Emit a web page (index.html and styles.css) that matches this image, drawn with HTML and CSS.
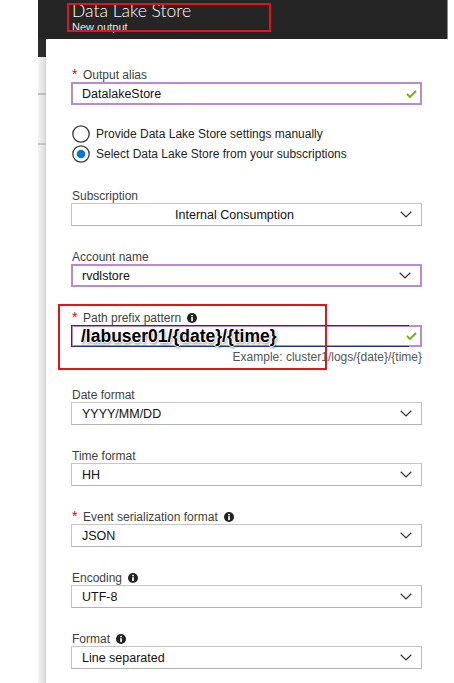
FILE: index.html
```html
<!DOCTYPE html>
<html lang="en">
<head>
<meta charset="utf-8">
<title>Data Lake Store - New output</title>
<link rel="stylesheet" href="styles.css">
</head>
<body>
<div class="stage">
  <div class="gutter"></div>
  <div class="blade">
    <header class="blade-head">
      <h1 class="blade-title">Data Lake Store</h1>
      <div class="blade-sub">New output</div>
    </header>
    <div class="blade-body">
      <div class="edge"></div>
      <form class="panel">
        <div class="field">
          <div class="label"><span class="req">*</span>Output alias</div>
          <div class="box box-purple"><span class="val">DatalakeStore</span><svg class="check" width="11" height="8" viewBox="0 0 11 8"><path d="M1 4 L4 7 L10 1" fill="none" stroke="#6bb700" stroke-width="1.8"/></svg></div>
        </div>

        <div class="radios">
          <div class="radio"><svg class="rc" width="18" height="18" viewBox="0 0 18 18"><circle cx="9" cy="9" r="8.2" fill="#fff" stroke="#3a3a3a" stroke-width="1.3"/></svg><span>Provide Data Lake Store settings manually</span></div>
          <div class="radio"><svg class="rc" width="18" height="18" viewBox="0 0 18 18"><circle cx="9" cy="9" r="8.2" fill="#fff" stroke="#3a3a3a" stroke-width="1.3"/><circle cx="9" cy="9" r="4.3" fill="#0078d7"/></svg><span>Select Data Lake Store from your subscriptions</span></div>
        </div>

        <div class="field">
          <div class="label">Subscription</div>
          <div class="box box-grey"><span class="val val-center">Internal Consumption</span><svg class="chev" width="12" height="7" viewBox="0 0 12 7"><path d="M0.7 0.8 L6 6 L11.3 0.8" fill="none" stroke="#333" stroke-width="1.2"/></svg></div>
        </div>

        <div class="field">
          <div class="label">Account name</div>
          <div class="box box-purple"><span class="val">rvdlstore</span><svg class="chev" width="12" height="7" viewBox="0 0 12 7"><path d="M0.7 0.8 L6 6 L11.3 0.8" fill="none" stroke="#333" stroke-width="1.2"/></svg></div>
        </div>

        <div class="field field-path">
          <div class="label"><span class="req">*</span>Path prefix pattern<svg class="info" width="10" height="10" viewBox="0 0 10 10"><circle cx="5" cy="5" r="5" fill="#222"/><rect x="4.2" y="4.2" width="1.7" height="3.9" fill="#fff"/><circle cx="5.05" cy="2.6" r="0.95" fill="#fff"/></svg></div>
          <div class="box box-purple box-path"><span class="val val-big">/labuser01/{date}/{time}</span><svg class="check" width="11" height="8" viewBox="0 0 11 8"><path d="M1 4 L4 7 L10 1" fill="none" stroke="#6bb700" stroke-width="1.8"/></svg></div>
          <div class="hint">Example: cluster1/logs/{date}/{time}</div>
        </div>

        <div class="field">
          <div class="label">Date format</div>
          <div class="box box-grey"><span class="val">YYYY/MM/DD</span><svg class="chev" width="12" height="7" viewBox="0 0 12 7"><path d="M0.7 0.8 L6 6 L11.3 0.8" fill="none" stroke="#333" stroke-width="1.2"/></svg></div>
        </div>

        <div class="field">
          <div class="label">Time format</div>
          <div class="box box-grey"><span class="val">HH</span><svg class="chev" width="12" height="7" viewBox="0 0 12 7"><path d="M0.7 0.8 L6 6 L11.3 0.8" fill="none" stroke="#333" stroke-width="1.2"/></svg></div>
        </div>

        <div class="field">
          <div class="label"><span class="req">*</span>Event serialization format<svg class="info" width="10" height="10" viewBox="0 0 10 10"><circle cx="5" cy="5" r="5" fill="#222"/><rect x="4.2" y="4.2" width="1.7" height="3.9" fill="#fff"/><circle cx="5.05" cy="2.6" r="0.95" fill="#fff"/></svg></div>
          <div class="box box-grey"><span class="val">JSON</span><svg class="chev" width="12" height="7" viewBox="0 0 12 7"><path d="M0.7 0.8 L6 6 L11.3 0.8" fill="none" stroke="#333" stroke-width="1.2"/></svg></div>
        </div>

        <div class="field">
          <div class="label">Encoding<svg class="info" width="10" height="10" viewBox="0 0 10 10"><circle cx="5" cy="5" r="5" fill="#222"/><rect x="4.2" y="4.2" width="1.7" height="3.9" fill="#fff"/><circle cx="5.05" cy="2.6" r="0.95" fill="#fff"/></svg></div>
          <div class="box box-grey"><span class="val">UTF-8</span><svg class="chev" width="12" height="7" viewBox="0 0 12 7"><path d="M0.7 0.8 L6 6 L11.3 0.8" fill="none" stroke="#333" stroke-width="1.2"/></svg></div>
        </div>

        <div class="field">
          <div class="label">Format<svg class="info" width="10" height="10" viewBox="0 0 10 10"><circle cx="5" cy="5" r="5" fill="#222"/><rect x="4.2" y="4.2" width="1.7" height="3.9" fill="#fff"/><circle cx="5.05" cy="2.6" r="0.95" fill="#fff"/></svg></div>
          <div class="box box-grey"><span class="val">Line separated</span><svg class="chev" width="12" height="7" viewBox="0 0 12 7"><path d="M0.7 0.8 L6 6 L11.3 0.8" fill="none" stroke="#333" stroke-width="1.2"/></svg></div>
        </div>
      </form>
    </div>
  </div>
</div>
<div class="mark mark-title"></div>
<div class="mark mark-path"></div>
</body>
</html>
```

FILE: styles.css
```css
* { box-sizing: border-box; }
html, body { margin: 0; padding: 0; background: #fff; }
body {
  font-family: "Liberation Sans", Arial, sans-serif;
  font-size: 12px;
  color: #222;
  position: relative;
  width: 454px;
  height: 683px;
  overflow: hidden;
}
.stage {
  display: flex;
  height: 683px;
}
.gutter { width: 38px; flex: none; }
.blade {
  width: 410px;
  flex: none;
  display: flex;
  flex-direction: column;
  min-height: 0;
}
.blade-head {
  flex: none;
  height: 39px;
  background: #252525;
  padding-left: 34px;
  padding-top: 1px;
  border-right: 1px solid #8a8a8a;
  overflow: hidden;
}
.blade-title {
  margin: 0;
  font-family: Lato, "Liberation Sans", sans-serif;
  font-weight: 300;
  font-size: 17.5px;
  line-height: 20px;
  color: #fff;
}
.blade-sub {
  margin-top: 0;
  font-size: 11px;
  line-height: 13px;
  color: #e6e6e6;
}
.blade-body {
  flex: 1;
  display: flex;
  min-height: 0;
}
.edge {
  width: 8px;
  flex: none;
  background:
    linear-gradient(to bottom, #2c2c2c 0 18px, transparent 18px),
    linear-gradient(to bottom, transparent 54px, #bdbdbd 54px 56px, transparent 56px),
    linear-gradient(to bottom, transparent 104px, #c4c4c4 104px 106px, transparent 106px),
    linear-gradient(to right, #f3f3f3, #e2e2e2 70%, #d2d2d2);
}
.panel {
  flex: 1;
  margin: 0;
  padding: 29px 26px 0 25px;
  display: flex;
  flex-direction: column;
}
.field { margin-bottom: 24px; flex: none; }
.label {
  height: 14px;
  line-height: 14px;
  font-size: 12px;
  color: #3e3e3e;
  display: flex;
  align-items: center;
  white-space: nowrap;
  padding-left: 1px;
}
.req {
  color: #e00000;
  font-size: 14px;
  width: 11px;
  flex: none;
  align-self: flex-start;
  line-height: 14px;
  margin-top: -1px;
}
.info { margin-left: 6px; flex: none; margin-top: -1px; }
.box {
  height: 23px;
  display: flex;
  align-items: center;
  padding: 0 8px 0 10px;
  background: #fff;
  position: relative;
}
.box-purple { border: 2px solid #bb8ad0; padding-left: 9px; }
.box-grey {
  border: 1px solid #c6c6c6;
  border-bottom-color: #b4b4b4;
  border-right-color: #bcbcbc;
}
.val {
  flex: 1;
  font-size: 12.5px;
  color: #111;
  white-space: nowrap;
}
.val-center { text-align: center; padding-right: 13px; }
.chev { flex: none; margin-right: 1px; }
.check { flex: none; margin-right: -5px; }
.radios {
  flex: none;
  margin-top: -5px;
  margin-bottom: 25px;
}
.radio {
  height: 20px;
  display: flex;
  align-items: center;
  padding-left: 1px;
  font-size: 12px;
  color: #222;
}
.rc { margin-right: 6px; flex: none; }

.box-path { height: 22px; }
.box-path::before {
  content: "";
  position: absolute;
  left: -2px;
  top: -2px;
  bottom: -2px;
  right: 11px;
  border: 1.5px solid #1c3580;
  border-right: none;
}
.val-big {
  position: relative;
  font-weight: bold;
  font-size: 17.5px;
  color: #000;
  margin-left: -1px;
  margin-top: 1px;
  text-shadow:
    0 0 1px #fff, 1px 0 1px #fff, -1px 0 1px #fff, 0 1px 1px #fff, 0 -1px 1px #fff,
    1px 2px 3px rgba(0,0,0,0.55);
}
.field-path .hint {
  margin-top: 3px;
  text-align: right;
  font-size: 12px;
  line-height: 14px;
  color: #555;
}
.mark {
  position: absolute;
  border: 2px solid #e5141c;
  pointer-events: none;
}
.mark-title { left: 67px; top: 3px; width: 204px; height: 29px; }
.mark-path { left: 58px; top: 304px; width: 269px; height: 66px; }
```
